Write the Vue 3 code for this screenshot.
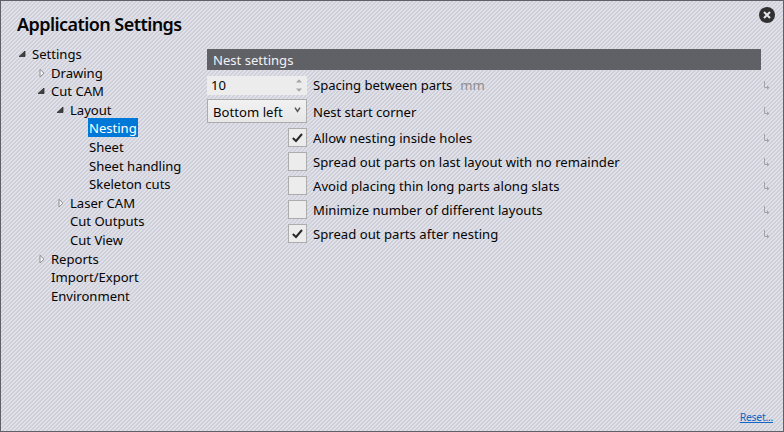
<script setup>
const tree = [
  { label: 'Settings', level: 0, state: 'open' },
  { label: 'Drawing', level: 1, state: 'closed' },
  { label: 'Cut CAM', level: 1, state: 'open' },
  { label: 'Layout', level: 2, state: 'open' },
  { label: 'Nesting', level: 3, selected: true },
  { label: 'Sheet', level: 3 },
  { label: 'Sheet handling', level: 3 },
  { label: 'Skeleton cuts', level: 3 },
  { label: 'Laser CAM', level: 2, state: 'closed' },
  { label: 'Cut Outputs', level: 2 },
  { label: 'Cut View', level: 2 },
  { label: 'Reports', level: 1, state: 'closed' },
  { label: 'Import/Export', level: 1 },
  { label: 'Environment', level: 1 },
]
const rows = [
  { kind: 'number', label: 'Spacing between parts', unit: 'mm' },
  { kind: 'select', label: 'Nest start corner' },
  { kind: 'check', label: 'Allow nesting inside holes', on: true },
  { kind: 'check', label: 'Spread out parts on last layout with no remainder' },
  { kind: 'check', label: 'Avoid placing thin long parts along slats' },
  { kind: 'check', label: 'Minimize number of different layouts' },
  { kind: 'check', label: 'Spread out parts after nesting', on: true },
]
</script>

<template>
  <div class="window">
    <header class="head">
      <h1>Application Settings</h1>
      <svg class="close" width="16" height="16" viewBox="0 0 16 16">
        <circle cx="8" cy="8" r="8" fill="#303031" />
        <path d="M5 5L11 11M11 5L5 11" stroke="#e5e5ec" stroke-width="2" />
      </svg>
    </header>
    <div class="body">
      <nav class="tree">
        <div v-for="n in tree" :key="n.label" class="node" :class="'level' + n.level">
          <span class="arrow">
            <svg v-if="n.state === 'open'" width="8" height="8" viewBox="0 0 8 8">
              <path d="M7 1V6.5H1Z" fill="#404040" stroke="#303030" stroke-width=".8" />
            </svg>
            <svg v-else-if="n.state === 'closed'" width="8" height="9" viewBox="0 0 8 9">
              <path d="M3 .3V8L7 4.2Z" fill="#f6f6f8" stroke="#8d8d92" />
            </svg>
          </span>
          <span class="name" :class="{ selected: n.selected }">{{ n.label }}</span>
        </div>
      </nav>
      <main class="panel">
        <h2>Nest settings</h2>
        <div v-for="r in rows" :key="r.label" class="row" :class="r.kind">
          <div class="control">
            <div v-if="r.kind === 'number'" class="numbox">
              <span>10</span>
              <svg width="8" height="13" viewBox="0 0 8 13">
                <path d="M1 3.5L4 .3L7 3.5ZM1 9.5L4 12.7L7 9.5Z" fill="#a5a5a5" />
              </svg>
            </div>
            <div v-else-if="r.kind === 'select'" class="selectbox">
              <span>Bottom left</span>
              <svg width="7" height="6" viewBox="0 0 7 6">
                <path d="M1 .7L3.5 4.5L6 .7" fill="none" stroke="#555" stroke-width="1.5" />
              </svg>
            </div>
            <div v-else class="checkbox">
              <svg v-if="r.on" width="11" height="10" viewBox="0 0 11 10">
                <path d="M.8 5L4 8L10 1" fill="none" stroke="#292929" stroke-width="2" />
              </svg>
            </div>
          </div>
          <span class="label">{{ r.label }}</span>
          <span v-if="r.unit" class="unit">{{ r.unit }}</span>
          <svg class="revert" width="7" height="9" viewBox="0 0 7 9">
            <path d="M1.5 0V6.5H5" fill="none" stroke="#a5a4a6" />
            <path d="M4 4.5L6.5 6.5L4 8.5Z" fill="#a0a2ae" />
          </svg>
        </div>
      </main>
    </div>
    <a class="reset">Reset...</a>
  </div>
</template>

<style>
body { overflow: hidden; }
</style>

<style scoped>
.window {
  box-sizing: border-box;
  width: 784px;
  height: 432px;
  display: flex;
  flex-direction: column;
  border: 1px solid #606167;
  background: linear-gradient(135deg, #e1e1e9 25%, #cfcfd9 25% 50%, #e1e1e9 50% 75%, #cfcfd9 75%) 0 0 / 4px 4px;
  font: 13.1px/18px "Noto Sans", "Open Sans", sans-serif;
  letter-spacing: -0.02px;
  color: #050505;
  white-space: nowrap;
}
.head {
  display: flex;
  justify-content: space-between;
  height: 44px;
  padding: 0 8px 0 16px;
}
h1 {
  margin: 10px 0 0;
  font-size: 18px;
  line-height: 26px;
  font-weight: 600;
  letter-spacing: -0.56px;
}
.close { margin-top: 6px; }
.body { display: flex; flex: 1; }
.tree { width: 206px; flex: none; }
.node { display: flex; height: 18.62px; }
.level0 { padding-left: 16px; }
.level1 { padding-left: 35px; }
.level2 { padding-left: 54px; }
.level3 { padding-left: 73px; }
.arrow { box-sizing: border-box; display: flex; width: 14px; padding: 5px 0 0 1px; flex: none; }
.name { padding: 0 1px; height: 18px; }
.selected { height: 19px; margin-top: -1px; line-height: 21px; background: #0078d7; color: #fff; }
.panel { width: 554px; padding-top: 4px; }
h2 {
  margin: 0 0 4px;
  height: 21px;
  padding-left: 6px;
  background: #606167;
  color: #f2f2f4;
  font-size: 13.1px;
  line-height: 22px;
  font-weight: 400;
}
.row { display: flex; align-items: center; height: 24px; }
.row.number { height: 22px; padding-bottom: 1px; }
.row.select { height: 29px; }
.control { display: flex; justify-content: flex-end; width: 100px; margin-right: 6px; }
.select .control, .check .control { margin-bottom: 1px; }
.label { letter-spacing: 0.02px; }
.number .label, .select .label { letter-spacing: -0.05px; }
.numbox, .selectbox {
  box-sizing: border-box;
  display: flex;
  justify-content: space-between;
  align-items: center;
  width: 100px;
  height: 19px;
  background: #ececec;
  padding: 0 4px;
}
.selectbox {
  height: 24px;
  border: 1px solid #acacac;
  background: linear-gradient(#f1f1f1, #e7e7e7);
  padding: 1px 5px 0;
  letter-spacing: 0.03px;
}
.selectbox svg { margin-bottom: 4px; }
.checkbox {
  box-sizing: border-box;
  display: flex;
  align-items: center;
  justify-content: center;
  width: 19px;
  height: 19px;
  border: 1px solid #acacac;
  background: #ececec;
}
.unit { margin-left: 8px; color: #8d8d8f; }
.revert { margin-left: auto; margin-right: -9px; }
.reset {
  align-self: flex-end;
  margin: 0 10px 5px 0;
  font-size: 10.5px;
  letter-spacing: -0.3px;
  line-height: 17px;
  color: #1267c5;
  text-decoration: underline;
}
</style>
